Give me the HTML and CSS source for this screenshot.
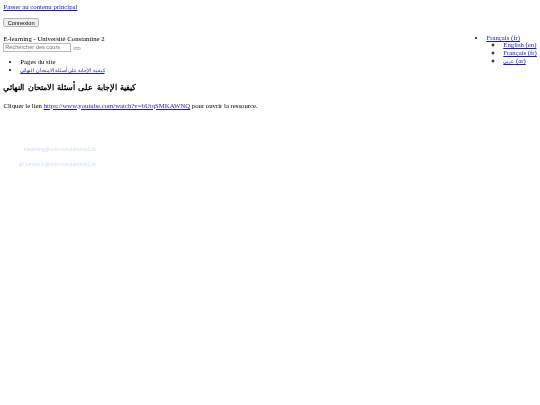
FILE: index.html
```html
<!DOCTYPE html>
<html lang="fr">
<head>
<meta charset="utf-8">
<title>كيفية الإجابة على أسئلة الامتحان النهائي</title>
<link rel="stylesheet" href="styles.css">
</head>
<body>
<p class="skip"><a href="#main">Passer au contenu principal</a></p>
<p class="login"><button type="button" class="connect">Connexion</button></p>
<nav class="lang">
  <ul>
    <li><a href="#">Français ‎(fr)‎</a>
      <ul class="sub">
        <li><a href="#">English ‎(en)‎</a></li>
        <li><a href="#">Français ‎(fr)‎</a></li>
        <li><a href="#"><span class="ar-small">عربي</span> ‎(ar)‎</a></li>
      </ul>
    </li>
  </ul>
</nav>
<div class="site">E-learning - Université Constantine 2</div>
<form class="search"><input type="text" placeholder="Rechercher des cours"><button type="button" class="go"></button></form>
<ul class="crumbs">
  <li>Pages du site</li>
  <li><a href="#" class="ar-small">كيفية الإجابة على أسئلة الامتحان النهائي</a></li>
</ul>
<h2 id="main">كيفية الإجابة على أسئلة الامتحان النهائي</h2>
<p class="body-text">Cliquer le lien <a href="#">https://www.youtube.com/watch?v=bUtqSMKAWNQ</a> pour ouvrir la ressource.</p>
<div class="contact">
  <div class="mail">elearning@univ-constantine2.dz</div>
  <div class="mail">ali.sannoun@univ-constantine2.dz</div>
</div>
</body>
</html>
```
FILE: styles.css
```css
html { zoom: 0.421875; }
body { margin: 8px; font-family: "Liberation Serif", serif; line-height: 19px; color: #000; background: #fff; filter: blur(0.2px); overflow-x: hidden; }
a { color: #1a1ac0; }
.skip { margin: 0 0 16px; }
.login { margin: 16px 0; }
.connect { height: 21px; padding: 0 8px; font: 13.3px "Liberation Sans", sans-serif; background: #efefef; border: 2px solid #b5b5b5; border-radius: 4px; color: #000; }
.lang { float: right; width: 119px; margin-top: 1px; white-space: nowrap; }
.lang ul { margin: 0; padding-left: 40px; }
.lang > ul { padding-left: 0; }
.lang .sub { margin-top: -2px; }
.site { margin-top: 18px; }
.search { margin: 0; display: flex; align-items: center; }
.search input { width: 160px; height: 23px; box-sizing: border-box; padding: 1px 2px; border: 2px solid #bbb; border-radius: 2px; font: 13.3px "Liberation Sans", sans-serif; }
.go { width: 20px; height: 8px; padding: 0; margin: 6px 0 0 4px; background: #e4e4e4; border: 2px solid #c4c4c4; border-radius: 4px; }
.crumbs { margin: 13px 0 16px; padding-left: 40px; }
.ar-small { font-size: 12px; }
h2 { font-size: 20px; word-spacing: 3px; line-height: 28px; font-weight: bold; margin: 20px 0 18px; }
.body-text { margin: 16px 0; }
.contact { margin-top: 84px; width: 220px; text-align: right; font-family: "Open Sans", sans-serif; font-size: 11.5px; color: #c8daf3; }
.mail { height: 36px; white-space: nowrap; }
```
